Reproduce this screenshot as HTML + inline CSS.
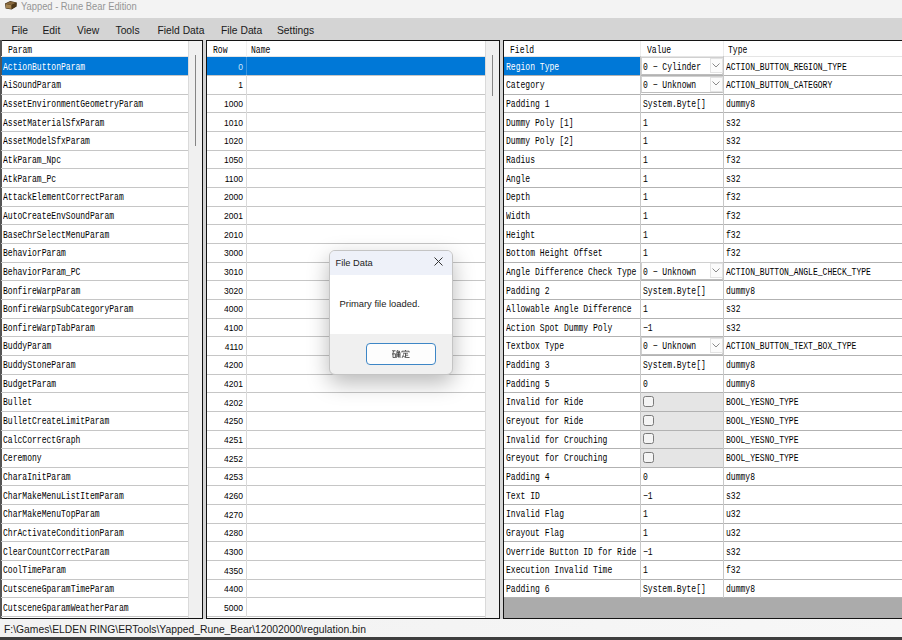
<!DOCTYPE html><html><head><meta charset="utf-8"><style>
*{margin:0;padding:0;box-sizing:border-box}
html,body{width:902px;height:640px;overflow:hidden;background:#d4d4d4;position:relative}
div,span{position:absolute}
.s{font-family:"Liberation Sans",sans-serif}
.m{font-family:"Liberation Mono",monospace;font-size:10px;white-space:nowrap;color:#000;transform:scaleX(0.805);transform-origin:0 0;margin-top:2.1px}
.hl{background:#a0a0a0;height:1px}
.vl{background:#a0a0a0;width:1px}
.sel{background:#0078d7}
.tx{line-height:18px;height:18px}
</style></head><body>

<div style="left:0;top:0;width:902px;height:18px;background:#f3f3f3"></div>
<svg style="position:absolute;left:0;top:0" width="20" height="12" viewBox="0 0 20 12"><path d="M5 3.6 L10.2 1.1 L16.8 2.4 L16.6 6.6 L11.6 9.4 L5.6 8.6 Z" fill="#3e2c14"/><path d="M5.6 3.9 L11.4 5.1 L11.5 8.9 L6 8.1 Z" fill="#a48452"/><path d="M5.6 3.7 L10.3 1.6 L16.2 2.7 L11.4 4.9 Z" fill="#86673c"/><path d="M11.9 5 L16.3 2.9 L16.1 6.3 L11.9 8.7 Z" fill="#4f3818"/></svg>
<div class="s" style="left:21px;top:1px;font-size:10.4px;line-height:11px;color:#959595;white-space:nowrap;transform:scaleX(0.9);transform-origin:0 0">Yapped - Rune Bear Edition</div>
<div style="left:0;top:18px;width:902px;height:22px;background:#d4d4d4"></div>
<div class="s" style="left:11.5px;top:24.6px;font-size:10.3px;line-height:12px;color:#1a1a1a;white-space:nowrap">File</div>
<div class="s" style="left:42.5px;top:24.6px;font-size:10.3px;line-height:12px;color:#1a1a1a;white-space:nowrap">Edit</div>
<div class="s" style="left:77px;top:24.6px;font-size:10.3px;line-height:12px;color:#1a1a1a;white-space:nowrap">View</div>
<div class="s" style="left:115.5px;top:24.6px;font-size:10.3px;line-height:12px;color:#1a1a1a;white-space:nowrap">Tools</div>
<div class="s" style="left:157.5px;top:24.6px;font-size:10.3px;line-height:12px;color:#1a1a1a;white-space:nowrap">Field Data</div>
<div class="s" style="left:221px;top:24.6px;font-size:10.3px;line-height:12px;color:#1a1a1a;white-space:nowrap">File Data</div>
<div class="s" style="left:277px;top:24.6px;font-size:10.3px;line-height:12px;color:#1a1a1a;white-space:nowrap">Settings</div>
<div style="left:0px;top:40px;width:203px;height:579px;border:1px solid #141414;background:#fff"></div>
<div style="left:0;top:40px;width:2px;height:579px;background:#555"></div>
<div class="m" style="left:7.5px;top:41px;line-height:15px">Param</div>
<div class="hl" style="left:1px;top:56px;width:187px;background:#e5e5e5"></div>
<div class="sel" style="left:2px;top:56.5px;width:186px;height:18.66px"></div>
<div class="hl" style="left:1px;top:74.96px;width:187px;background:#c6c6c6"></div>
<div class="m" style="left:3.1px;top:56.50px;line-height:18.66px;color:#fff">ActionButtonParam</div>
<div class="hl" style="left:1px;top:93.62px;width:187px;background:#c6c6c6"></div>
<div class="m" style="left:3.1px;top:75.16px;line-height:18.66px;color:#000">AiSoundParam</div>
<div class="hl" style="left:1px;top:112.28px;width:187px;background:#c6c6c6"></div>
<div class="m" style="left:3.1px;top:93.82px;line-height:18.66px;color:#000">AssetEnvironmentGeometryParam</div>
<div class="hl" style="left:1px;top:130.94px;width:187px;background:#c6c6c6"></div>
<div class="m" style="left:3.1px;top:112.48px;line-height:18.66px;color:#000">AssetMaterialSfxParam</div>
<div class="hl" style="left:1px;top:149.60px;width:187px;background:#c6c6c6"></div>
<div class="m" style="left:3.1px;top:131.14px;line-height:18.66px;color:#000">AssetModelSfxParam</div>
<div class="hl" style="left:1px;top:168.26px;width:187px;background:#c6c6c6"></div>
<div class="m" style="left:3.1px;top:149.80px;line-height:18.66px;color:#000">AtkParam_Npc</div>
<div class="hl" style="left:1px;top:186.92px;width:187px;background:#c6c6c6"></div>
<div class="m" style="left:3.1px;top:168.46px;line-height:18.66px;color:#000">AtkParam_Pc</div>
<div class="hl" style="left:1px;top:205.58px;width:187px;background:#c6c6c6"></div>
<div class="m" style="left:3.1px;top:187.12px;line-height:18.66px;color:#000">AttackElementCorrectParam</div>
<div class="hl" style="left:1px;top:224.24px;width:187px;background:#c6c6c6"></div>
<div class="m" style="left:3.1px;top:205.78px;line-height:18.66px;color:#000">AutoCreateEnvSoundParam</div>
<div class="hl" style="left:1px;top:242.90px;width:187px;background:#c6c6c6"></div>
<div class="m" style="left:3.1px;top:224.44px;line-height:18.66px;color:#000">BaseChrSelectMenuParam</div>
<div class="hl" style="left:1px;top:261.56px;width:187px;background:#c6c6c6"></div>
<div class="m" style="left:3.1px;top:243.10px;line-height:18.66px;color:#000">BehaviorParam</div>
<div class="hl" style="left:1px;top:280.22px;width:187px;background:#c6c6c6"></div>
<div class="m" style="left:3.1px;top:261.76px;line-height:18.66px;color:#000">BehaviorParam_PC</div>
<div class="hl" style="left:1px;top:298.88px;width:187px;background:#c6c6c6"></div>
<div class="m" style="left:3.1px;top:280.42px;line-height:18.66px;color:#000">BonfireWarpParam</div>
<div class="hl" style="left:1px;top:317.54px;width:187px;background:#c6c6c6"></div>
<div class="m" style="left:3.1px;top:299.08px;line-height:18.66px;color:#000">BonfireWarpSubCategoryParam</div>
<div class="hl" style="left:1px;top:336.20px;width:187px;background:#c6c6c6"></div>
<div class="m" style="left:3.1px;top:317.74px;line-height:18.66px;color:#000">BonfireWarpTabParam</div>
<div class="hl" style="left:1px;top:354.86px;width:187px;background:#c6c6c6"></div>
<div class="m" style="left:3.1px;top:336.40px;line-height:18.66px;color:#000">BuddyParam</div>
<div class="hl" style="left:1px;top:373.52px;width:187px;background:#c6c6c6"></div>
<div class="m" style="left:3.1px;top:355.06px;line-height:18.66px;color:#000">BuddyStoneParam</div>
<div class="hl" style="left:1px;top:392.18px;width:187px;background:#c6c6c6"></div>
<div class="m" style="left:3.1px;top:373.72px;line-height:18.66px;color:#000">BudgetParam</div>
<div class="hl" style="left:1px;top:410.84px;width:187px;background:#c6c6c6"></div>
<div class="m" style="left:3.1px;top:392.38px;line-height:18.66px;color:#000">Bullet</div>
<div class="hl" style="left:1px;top:429.50px;width:187px;background:#c6c6c6"></div>
<div class="m" style="left:3.1px;top:411.04px;line-height:18.66px;color:#000">BulletCreateLimitParam</div>
<div class="hl" style="left:1px;top:448.16px;width:187px;background:#c6c6c6"></div>
<div class="m" style="left:3.1px;top:429.70px;line-height:18.66px;color:#000">CalcCorrectGraph</div>
<div class="hl" style="left:1px;top:466.82px;width:187px;background:#c6c6c6"></div>
<div class="m" style="left:3.1px;top:448.36px;line-height:18.66px;color:#000">Ceremony</div>
<div class="hl" style="left:1px;top:485.48px;width:187px;background:#c6c6c6"></div>
<div class="m" style="left:3.1px;top:467.02px;line-height:18.66px;color:#000">CharaInitParam</div>
<div class="hl" style="left:1px;top:504.14px;width:187px;background:#c6c6c6"></div>
<div class="m" style="left:3.1px;top:485.68px;line-height:18.66px;color:#000">CharMakeMenuListItemParam</div>
<div class="hl" style="left:1px;top:522.80px;width:187px;background:#c6c6c6"></div>
<div class="m" style="left:3.1px;top:504.34px;line-height:18.66px;color:#000">CharMakeMenuTopParam</div>
<div class="hl" style="left:1px;top:541.46px;width:187px;background:#c6c6c6"></div>
<div class="m" style="left:3.1px;top:523.00px;line-height:18.66px;color:#000">ChrActivateConditionParam</div>
<div class="hl" style="left:1px;top:560.12px;width:187px;background:#c6c6c6"></div>
<div class="m" style="left:3.1px;top:541.66px;line-height:18.66px;color:#000">ClearCountCorrectParam</div>
<div class="hl" style="left:1px;top:578.78px;width:187px;background:#c6c6c6"></div>
<div class="m" style="left:3.1px;top:560.32px;line-height:18.66px;color:#000">CoolTimeParam</div>
<div class="hl" style="left:1px;top:597.44px;width:187px;background:#c6c6c6"></div>
<div class="m" style="left:3.1px;top:578.98px;line-height:18.66px;color:#000">CutsceneGparamTimeParam</div>
<div class="hl" style="left:1px;top:616.10px;width:187px;background:#c6c6c6"></div>
<div class="m" style="left:3.1px;top:597.64px;line-height:18.66px;color:#000">CutsceneGparamWeatherParam</div>
<div style="left:188px;top:41px;width:14px;height:577px;background:#f0f0f0;border-left:1px solid #dadada"></div>
<div style="left:194.5px;top:55px;width:1.5px;height:91px;background:#858585"></div>
<div style="left:206px;top:40px;width:294px;height:579px;border:1px solid #141414;background:#fff"></div>
<div style="left:206px;top:40px;width:1px;height:579px;background:#141414"></div>
<div class="m" style="left:213px;top:41px;line-height:15px">Row</div>
<div class="m" style="left:250.8px;top:41px;line-height:15px">Name</div>
<div class="hl" style="left:207px;top:56px;width:278px;background:#e5e5e5"></div>
<div class="vl" style="left:246px;top:41px;height:16px;background:#f0f0f0"></div>
<div class="sel" style="left:207px;top:56.5px;width:278px;height:18.66px"></div>
<div class="hl" style="left:207px;top:74.96px;width:278px;background:#c6c6c6"></div>
<div class="s" style="left:207px;width:36px;text-align:right;top:57.70px;line-height:18.66px;font-size:9.9px;color:#cfe6fb;transform:scaleX(0.86);transform-origin:100% 0">0</div>
<div class="hl" style="left:207px;top:93.62px;width:278px;background:#c6c6c6"></div>
<div class="s" style="left:207px;width:36px;text-align:right;top:76.36px;line-height:18.66px;font-size:9.9px;color:#000;transform:scaleX(0.86);transform-origin:100% 0">1</div>
<div class="hl" style="left:207px;top:112.28px;width:278px;background:#c6c6c6"></div>
<div class="s" style="left:207px;width:36px;text-align:right;top:95.02px;line-height:18.66px;font-size:9.9px;color:#000;transform:scaleX(0.86);transform-origin:100% 0">1000</div>
<div class="hl" style="left:207px;top:130.94px;width:278px;background:#c6c6c6"></div>
<div class="s" style="left:207px;width:36px;text-align:right;top:113.68px;line-height:18.66px;font-size:9.9px;color:#000;transform:scaleX(0.86);transform-origin:100% 0">1010</div>
<div class="hl" style="left:207px;top:149.60px;width:278px;background:#c6c6c6"></div>
<div class="s" style="left:207px;width:36px;text-align:right;top:132.34px;line-height:18.66px;font-size:9.9px;color:#000;transform:scaleX(0.86);transform-origin:100% 0">1020</div>
<div class="hl" style="left:207px;top:168.26px;width:278px;background:#c6c6c6"></div>
<div class="s" style="left:207px;width:36px;text-align:right;top:151.00px;line-height:18.66px;font-size:9.9px;color:#000;transform:scaleX(0.86);transform-origin:100% 0">1050</div>
<div class="hl" style="left:207px;top:186.92px;width:278px;background:#c6c6c6"></div>
<div class="s" style="left:207px;width:36px;text-align:right;top:169.66px;line-height:18.66px;font-size:9.9px;color:#000;transform:scaleX(0.86);transform-origin:100% 0">1100</div>
<div class="hl" style="left:207px;top:205.58px;width:278px;background:#c6c6c6"></div>
<div class="s" style="left:207px;width:36px;text-align:right;top:188.32px;line-height:18.66px;font-size:9.9px;color:#000;transform:scaleX(0.86);transform-origin:100% 0">2000</div>
<div class="hl" style="left:207px;top:224.24px;width:278px;background:#c6c6c6"></div>
<div class="s" style="left:207px;width:36px;text-align:right;top:206.98px;line-height:18.66px;font-size:9.9px;color:#000;transform:scaleX(0.86);transform-origin:100% 0">2001</div>
<div class="hl" style="left:207px;top:242.90px;width:278px;background:#c6c6c6"></div>
<div class="s" style="left:207px;width:36px;text-align:right;top:225.64px;line-height:18.66px;font-size:9.9px;color:#000;transform:scaleX(0.86);transform-origin:100% 0">2010</div>
<div class="hl" style="left:207px;top:261.56px;width:278px;background:#c6c6c6"></div>
<div class="s" style="left:207px;width:36px;text-align:right;top:244.30px;line-height:18.66px;font-size:9.9px;color:#000;transform:scaleX(0.86);transform-origin:100% 0">3000</div>
<div class="hl" style="left:207px;top:280.22px;width:278px;background:#c6c6c6"></div>
<div class="s" style="left:207px;width:36px;text-align:right;top:262.96px;line-height:18.66px;font-size:9.9px;color:#000;transform:scaleX(0.86);transform-origin:100% 0">3010</div>
<div class="hl" style="left:207px;top:298.88px;width:278px;background:#c6c6c6"></div>
<div class="s" style="left:207px;width:36px;text-align:right;top:281.62px;line-height:18.66px;font-size:9.9px;color:#000;transform:scaleX(0.86);transform-origin:100% 0">3020</div>
<div class="hl" style="left:207px;top:317.54px;width:278px;background:#c6c6c6"></div>
<div class="s" style="left:207px;width:36px;text-align:right;top:300.28px;line-height:18.66px;font-size:9.9px;color:#000;transform:scaleX(0.86);transform-origin:100% 0">4000</div>
<div class="hl" style="left:207px;top:336.20px;width:278px;background:#c6c6c6"></div>
<div class="s" style="left:207px;width:36px;text-align:right;top:318.94px;line-height:18.66px;font-size:9.9px;color:#000;transform:scaleX(0.86);transform-origin:100% 0">4100</div>
<div class="hl" style="left:207px;top:354.86px;width:278px;background:#c6c6c6"></div>
<div class="s" style="left:207px;width:36px;text-align:right;top:337.60px;line-height:18.66px;font-size:9.9px;color:#000;transform:scaleX(0.86);transform-origin:100% 0">4110</div>
<div class="hl" style="left:207px;top:373.52px;width:278px;background:#c6c6c6"></div>
<div class="s" style="left:207px;width:36px;text-align:right;top:356.26px;line-height:18.66px;font-size:9.9px;color:#000;transform:scaleX(0.86);transform-origin:100% 0">4200</div>
<div class="hl" style="left:207px;top:392.18px;width:278px;background:#c6c6c6"></div>
<div class="s" style="left:207px;width:36px;text-align:right;top:374.92px;line-height:18.66px;font-size:9.9px;color:#000;transform:scaleX(0.86);transform-origin:100% 0">4201</div>
<div class="hl" style="left:207px;top:410.84px;width:278px;background:#c6c6c6"></div>
<div class="s" style="left:207px;width:36px;text-align:right;top:393.58px;line-height:18.66px;font-size:9.9px;color:#000;transform:scaleX(0.86);transform-origin:100% 0">4202</div>
<div class="hl" style="left:207px;top:429.50px;width:278px;background:#c6c6c6"></div>
<div class="s" style="left:207px;width:36px;text-align:right;top:412.24px;line-height:18.66px;font-size:9.9px;color:#000;transform:scaleX(0.86);transform-origin:100% 0">4250</div>
<div class="hl" style="left:207px;top:448.16px;width:278px;background:#c6c6c6"></div>
<div class="s" style="left:207px;width:36px;text-align:right;top:430.90px;line-height:18.66px;font-size:9.9px;color:#000;transform:scaleX(0.86);transform-origin:100% 0">4251</div>
<div class="hl" style="left:207px;top:466.82px;width:278px;background:#c6c6c6"></div>
<div class="s" style="left:207px;width:36px;text-align:right;top:449.56px;line-height:18.66px;font-size:9.9px;color:#000;transform:scaleX(0.86);transform-origin:100% 0">4252</div>
<div class="hl" style="left:207px;top:485.48px;width:278px;background:#c6c6c6"></div>
<div class="s" style="left:207px;width:36px;text-align:right;top:468.22px;line-height:18.66px;font-size:9.9px;color:#000;transform:scaleX(0.86);transform-origin:100% 0">4253</div>
<div class="hl" style="left:207px;top:504.14px;width:278px;background:#c6c6c6"></div>
<div class="s" style="left:207px;width:36px;text-align:right;top:486.88px;line-height:18.66px;font-size:9.9px;color:#000;transform:scaleX(0.86);transform-origin:100% 0">4260</div>
<div class="hl" style="left:207px;top:522.80px;width:278px;background:#c6c6c6"></div>
<div class="s" style="left:207px;width:36px;text-align:right;top:505.54px;line-height:18.66px;font-size:9.9px;color:#000;transform:scaleX(0.86);transform-origin:100% 0">4270</div>
<div class="hl" style="left:207px;top:541.46px;width:278px;background:#c6c6c6"></div>
<div class="s" style="left:207px;width:36px;text-align:right;top:524.20px;line-height:18.66px;font-size:9.9px;color:#000;transform:scaleX(0.86);transform-origin:100% 0">4280</div>
<div class="hl" style="left:207px;top:560.12px;width:278px;background:#c6c6c6"></div>
<div class="s" style="left:207px;width:36px;text-align:right;top:542.86px;line-height:18.66px;font-size:9.9px;color:#000;transform:scaleX(0.86);transform-origin:100% 0">4300</div>
<div class="hl" style="left:207px;top:578.78px;width:278px;background:#c6c6c6"></div>
<div class="s" style="left:207px;width:36px;text-align:right;top:561.52px;line-height:18.66px;font-size:9.9px;color:#000;transform:scaleX(0.86);transform-origin:100% 0">4350</div>
<div class="hl" style="left:207px;top:597.44px;width:278px;background:#c6c6c6"></div>
<div class="s" style="left:207px;width:36px;text-align:right;top:580.18px;line-height:18.66px;font-size:9.9px;color:#000;transform:scaleX(0.86);transform-origin:100% 0">4400</div>
<div class="hl" style="left:207px;top:616.10px;width:278px;background:#c6c6c6"></div>
<div class="s" style="left:207px;width:36px;text-align:right;top:598.84px;line-height:18.66px;font-size:9.9px;color:#000;transform:scaleX(0.86);transform-origin:100% 0">5000</div>
<div class="vl" style="left:246px;top:56.5px;height:560px;background:#dadada"></div>
<div class="vl" style="left:246px;top:56.5px;height:18.66px;background:#3b95de"></div>
<div style="left:485px;top:41px;width:14px;height:577px;background:#f0f0f0;border-left:1px solid #dadada"></div>
<div style="left:491.5px;top:55px;width:1.5px;height:41px;background:#858585"></div>
<div style="left:503px;top:40px;width:400px;height:579px;border:1px solid #141414;border-right:none;background:#ababab"></div>
<div style="left:503px;top:40px;width:1px;height:579px;background:#141414"></div>
<div style="left:504px;top:41px;width:398px;height:557.14px;background:#fff"></div>
<div class="m" style="left:510px;top:41px;line-height:15px">Field</div>
<div class="m" style="left:646.5px;top:41px;line-height:15px">Value</div>
<div class="m" style="left:727.5px;top:41px;line-height:15px">Type</div>
<div class="hl" style="left:504px;top:56px;width:398px;background:#e5e5e5"></div>
<div class="sel" style="left:504px;top:56.5px;width:136.5px;height:18.66px"></div>
<div style="left:641px;top:392.38px;width:82px;height:18.66px;background:#e5e5e5"></div>
<div style="left:641px;top:411.04px;width:82px;height:18.66px;background:#e5e5e5"></div>
<div style="left:641px;top:429.7px;width:82px;height:18.66px;background:#e5e5e5"></div>
<div style="left:641px;top:448.36px;width:82px;height:18.66px;background:#e5e5e5"></div>
<div class="hl" style="left:504px;top:74.96px;width:398px;background:#b2b2b2"></div>
<div class="hl" style="left:504px;top:93.62px;width:398px;background:#b2b2b2"></div>
<div class="hl" style="left:504px;top:112.28px;width:398px;background:#b2b2b2"></div>
<div class="hl" style="left:504px;top:130.94px;width:398px;background:#b2b2b2"></div>
<div class="hl" style="left:504px;top:149.60px;width:398px;background:#b2b2b2"></div>
<div class="hl" style="left:504px;top:168.26px;width:398px;background:#b2b2b2"></div>
<div class="hl" style="left:504px;top:186.92px;width:398px;background:#b2b2b2"></div>
<div class="hl" style="left:504px;top:205.58px;width:398px;background:#b2b2b2"></div>
<div class="hl" style="left:504px;top:224.24px;width:398px;background:#b2b2b2"></div>
<div class="hl" style="left:504px;top:242.90px;width:398px;background:#b2b2b2"></div>
<div class="hl" style="left:504px;top:261.56px;width:398px;background:#b2b2b2"></div>
<div class="hl" style="left:504px;top:280.22px;width:398px;background:#b2b2b2"></div>
<div class="hl" style="left:504px;top:298.88px;width:398px;background:#b2b2b2"></div>
<div class="hl" style="left:504px;top:317.54px;width:398px;background:#b2b2b2"></div>
<div class="hl" style="left:504px;top:336.20px;width:398px;background:#b2b2b2"></div>
<div class="hl" style="left:504px;top:354.86px;width:398px;background:#b2b2b2"></div>
<div class="hl" style="left:504px;top:373.52px;width:398px;background:#b2b2b2"></div>
<div class="hl" style="left:504px;top:392.18px;width:398px;background:#b2b2b2"></div>
<div class="hl" style="left:504px;top:410.84px;width:398px;background:#b2b2b2"></div>
<div class="hl" style="left:504px;top:429.50px;width:398px;background:#b2b2b2"></div>
<div class="hl" style="left:504px;top:448.16px;width:398px;background:#b2b2b2"></div>
<div class="hl" style="left:504px;top:466.82px;width:398px;background:#b2b2b2"></div>
<div class="hl" style="left:504px;top:485.48px;width:398px;background:#b2b2b2"></div>
<div class="hl" style="left:504px;top:504.14px;width:398px;background:#b2b2b2"></div>
<div class="hl" style="left:504px;top:522.80px;width:398px;background:#b2b2b2"></div>
<div class="hl" style="left:504px;top:541.46px;width:398px;background:#b2b2b2"></div>
<div class="hl" style="left:504px;top:560.12px;width:398px;background:#b2b2b2"></div>
<div class="hl" style="left:504px;top:578.78px;width:398px;background:#b2b2b2"></div>
<div class="hl" style="left:504px;top:597.44px;width:398px;background:#b2b2b2"></div>
<div class="m" style="left:506px;top:56.50px;line-height:18.66px;color:#fff">Region Type</div>
<div style="left:641px;top:57.00px;width:82px;height:17.66px;background:#fff;border:1px solid #d0d0d0;border-bottom-color:#bdbdbd"></div>
<div style="left:709.5px;top:58.00px;width:13px;height:15.16px;background:#fbfbfb;border:1px solid #e3e3e3"></div>
<svg style="position:absolute;left:712px;top:62.80px" width="8" height="5" viewBox="0 0 8 5"><path d="M0.5 0.5 L4 4 L7.5 0.5" fill="none" stroke="#8a8a8a" stroke-width="1"/></svg>
<div class="m" style="left:643px;top:56.50px;line-height:18.66px">0 − Cylinder</div>
<div class="m" style="left:726px;top:56.50px;line-height:18.66px">ACTION_BUTTON_REGION_TYPE</div>
<div class="m" style="left:506px;top:75.16px;line-height:18.66px;color:#000">Category</div>
<div style="left:641px;top:75.66px;width:82px;height:17.66px;background:#fff;border:1px solid #d0d0d0;border-bottom-color:#bdbdbd"></div>
<div style="left:709.5px;top:76.66px;width:13px;height:15.16px;background:#fbfbfb;border:1px solid #e3e3e3"></div>
<svg style="position:absolute;left:712px;top:81.46px" width="8" height="5" viewBox="0 0 8 5"><path d="M0.5 0.5 L4 4 L7.5 0.5" fill="none" stroke="#8a8a8a" stroke-width="1"/></svg>
<div class="m" style="left:643px;top:75.16px;line-height:18.66px">0 − Unknown</div>
<div class="m" style="left:726px;top:75.16px;line-height:18.66px">ACTION_BUTTON_CATEGORY</div>
<div class="m" style="left:506px;top:93.82px;line-height:18.66px;color:#000">Padding 1</div>
<div class="m" style="left:643px;top:93.82px;line-height:18.66px">System.Byte[]</div>
<div class="m" style="left:726px;top:93.82px;line-height:18.66px">dummy8</div>
<div class="m" style="left:506px;top:112.48px;line-height:18.66px;color:#000">Dummy Poly [1]</div>
<div class="m" style="left:643px;top:112.48px;line-height:18.66px">1</div>
<div class="m" style="left:726px;top:112.48px;line-height:18.66px">s32</div>
<div class="m" style="left:506px;top:131.14px;line-height:18.66px;color:#000">Dummy Poly [2]</div>
<div class="m" style="left:643px;top:131.14px;line-height:18.66px">1</div>
<div class="m" style="left:726px;top:131.14px;line-height:18.66px">s32</div>
<div class="m" style="left:506px;top:149.80px;line-height:18.66px;color:#000">Radius</div>
<div class="m" style="left:643px;top:149.80px;line-height:18.66px">1</div>
<div class="m" style="left:726px;top:149.80px;line-height:18.66px">f32</div>
<div class="m" style="left:506px;top:168.46px;line-height:18.66px;color:#000">Angle</div>
<div class="m" style="left:643px;top:168.46px;line-height:18.66px">1</div>
<div class="m" style="left:726px;top:168.46px;line-height:18.66px">s32</div>
<div class="m" style="left:506px;top:187.12px;line-height:18.66px;color:#000">Depth</div>
<div class="m" style="left:643px;top:187.12px;line-height:18.66px">1</div>
<div class="m" style="left:726px;top:187.12px;line-height:18.66px">f32</div>
<div class="m" style="left:506px;top:205.78px;line-height:18.66px;color:#000">Width</div>
<div class="m" style="left:643px;top:205.78px;line-height:18.66px">1</div>
<div class="m" style="left:726px;top:205.78px;line-height:18.66px">f32</div>
<div class="m" style="left:506px;top:224.44px;line-height:18.66px;color:#000">Height</div>
<div class="m" style="left:643px;top:224.44px;line-height:18.66px">1</div>
<div class="m" style="left:726px;top:224.44px;line-height:18.66px">f32</div>
<div class="m" style="left:506px;top:243.10px;line-height:18.66px;color:#000">Bottom Height Offset</div>
<div class="m" style="left:643px;top:243.10px;line-height:18.66px">1</div>
<div class="m" style="left:726px;top:243.10px;line-height:18.66px">f32</div>
<div class="m" style="left:506px;top:261.76px;line-height:18.66px;color:#000">Angle Difference Check Type</div>
<div style="left:641px;top:262.26px;width:82px;height:17.66px;background:#fff;border:1px solid #d0d0d0;border-bottom-color:#bdbdbd"></div>
<div style="left:709.5px;top:263.26px;width:13px;height:15.16px;background:#fbfbfb;border:1px solid #e3e3e3"></div>
<svg style="position:absolute;left:712px;top:268.06px" width="8" height="5" viewBox="0 0 8 5"><path d="M0.5 0.5 L4 4 L7.5 0.5" fill="none" stroke="#8a8a8a" stroke-width="1"/></svg>
<div class="m" style="left:643px;top:261.76px;line-height:18.66px">0 − Unknown</div>
<div class="m" style="left:726px;top:261.76px;line-height:18.66px">ACTION_BUTTON_ANGLE_CHECK_TYPE</div>
<div class="m" style="left:506px;top:280.42px;line-height:18.66px;color:#000">Padding 2</div>
<div class="m" style="left:643px;top:280.42px;line-height:18.66px">System.Byte[]</div>
<div class="m" style="left:726px;top:280.42px;line-height:18.66px">dummy8</div>
<div class="m" style="left:506px;top:299.08px;line-height:18.66px;color:#000">Allowable Angle Difference</div>
<div class="m" style="left:643px;top:299.08px;line-height:18.66px">1</div>
<div class="m" style="left:726px;top:299.08px;line-height:18.66px">s32</div>
<div class="m" style="left:506px;top:317.74px;line-height:18.66px;color:#000">Action Spot Dummy Poly</div>
<div class="m" style="left:643px;top:317.74px;line-height:18.66px">−1</div>
<div class="m" style="left:726px;top:317.74px;line-height:18.66px">s32</div>
<div class="m" style="left:506px;top:336.40px;line-height:18.66px;color:#000">Textbox Type</div>
<div style="left:641px;top:336.90px;width:82px;height:17.66px;background:#fff;border:1px solid #d0d0d0;border-bottom-color:#bdbdbd"></div>
<div style="left:709.5px;top:337.90px;width:13px;height:15.16px;background:#fbfbfb;border:1px solid #e3e3e3"></div>
<svg style="position:absolute;left:712px;top:342.70px" width="8" height="5" viewBox="0 0 8 5"><path d="M0.5 0.5 L4 4 L7.5 0.5" fill="none" stroke="#8a8a8a" stroke-width="1"/></svg>
<div class="m" style="left:643px;top:336.40px;line-height:18.66px">0 − Unknown</div>
<div class="m" style="left:726px;top:336.40px;line-height:18.66px">ACTION_BUTTON_TEXT_BOX_TYPE</div>
<div class="m" style="left:506px;top:355.06px;line-height:18.66px;color:#000">Padding 3</div>
<div class="m" style="left:643px;top:355.06px;line-height:18.66px">System.Byte[]</div>
<div class="m" style="left:726px;top:355.06px;line-height:18.66px">dummy8</div>
<div class="m" style="left:506px;top:373.72px;line-height:18.66px;color:#000">Padding 5</div>
<div class="m" style="left:643px;top:373.72px;line-height:18.66px">0</div>
<div class="m" style="left:726px;top:373.72px;line-height:18.66px">dummy8</div>
<div style="left:643px;top:396.08px;width:10.6px;height:11px;border:1px solid #7a7a7a;border-radius:2.5px;background:#f4f4f4"></div>
<div class="m" style="left:506px;top:392.38px;line-height:18.66px;color:#000">Invalid for Ride</div>
<div class="m" style="left:726px;top:392.38px;line-height:18.66px">BOOL_YESNO_TYPE</div>
<div style="left:643px;top:414.74px;width:10.6px;height:11px;border:1px solid #7a7a7a;border-radius:2.5px;background:#f4f4f4"></div>
<div class="m" style="left:506px;top:411.04px;line-height:18.66px;color:#000">Greyout for Ride</div>
<div class="m" style="left:726px;top:411.04px;line-height:18.66px">BOOL_YESNO_TYPE</div>
<div style="left:643px;top:433.40px;width:10.6px;height:11px;border:1px solid #7a7a7a;border-radius:2.5px;background:#f4f4f4"></div>
<div class="m" style="left:506px;top:429.70px;line-height:18.66px;color:#000">Invalid for Crouching</div>
<div class="m" style="left:726px;top:429.70px;line-height:18.66px">BOOL_YESNO_TYPE</div>
<div style="left:643px;top:452.06px;width:10.6px;height:11px;border:1px solid #7a7a7a;border-radius:2.5px;background:#f4f4f4"></div>
<div class="m" style="left:506px;top:448.36px;line-height:18.66px;color:#000">Greyout for Crouching</div>
<div class="m" style="left:726px;top:448.36px;line-height:18.66px">BOOL_YESNO_TYPE</div>
<div class="m" style="left:506px;top:467.02px;line-height:18.66px;color:#000">Padding 4</div>
<div class="m" style="left:643px;top:467.02px;line-height:18.66px">0</div>
<div class="m" style="left:726px;top:467.02px;line-height:18.66px">dummy8</div>
<div class="m" style="left:506px;top:485.68px;line-height:18.66px;color:#000">Text ID</div>
<div class="m" style="left:643px;top:485.68px;line-height:18.66px">−1</div>
<div class="m" style="left:726px;top:485.68px;line-height:18.66px">s32</div>
<div class="m" style="left:506px;top:504.34px;line-height:18.66px;color:#000">Invalid Flag</div>
<div class="m" style="left:643px;top:504.34px;line-height:18.66px">1</div>
<div class="m" style="left:726px;top:504.34px;line-height:18.66px">u32</div>
<div class="m" style="left:506px;top:523.00px;line-height:18.66px;color:#000">Grayout Flag</div>
<div class="m" style="left:643px;top:523.00px;line-height:18.66px">1</div>
<div class="m" style="left:726px;top:523.00px;line-height:18.66px">u32</div>
<div class="m" style="left:506px;top:541.66px;line-height:18.66px;color:#000">Override Button ID for Ride</div>
<div class="m" style="left:643px;top:541.66px;line-height:18.66px">−1</div>
<div class="m" style="left:726px;top:541.66px;line-height:18.66px">s32</div>
<div class="m" style="left:506px;top:560.32px;line-height:18.66px;color:#000">Execution Invalid Time</div>
<div class="m" style="left:643px;top:560.32px;line-height:18.66px">1</div>
<div class="m" style="left:726px;top:560.32px;line-height:18.66px">f32</div>
<div class="m" style="left:506px;top:578.98px;line-height:18.66px;color:#000">Padding 6</div>
<div class="m" style="left:643px;top:578.98px;line-height:18.66px">System.Byte[]</div>
<div class="m" style="left:726px;top:578.98px;line-height:18.66px">dummy8</div>
<div class="vl" style="left:640px;top:41px;height:556.64px;background:#c8c8c8"></div>
<div class="vl" style="left:723px;top:41px;height:556.64px;background:#c8c8c8"></div>
<div class="vl" style="left:640px;top:41px;height:15px;background:#ececec"></div>
<div class="vl" style="left:723px;top:41px;height:15px;background:#ececec"></div>
<div style="left:0;top:619px;width:902px;height:18px;background:linear-gradient(90deg,#f2f2f2,#f4f4f4 50%,#f7f7f7)"></div>
<div class="s" style="left:4px;top:622.5px;font-size:10.33px;line-height:14px;color:#1a1a1a;white-space:nowrap">F:\Games\ELDEN RING\ERTools\Yapped_Rune_Bear\12002000\regulation.bin</div>
<div style="left:0;top:637px;width:902px;height:3px;background:#3e3e3e"></div>
<div style="left:329px;top:249.5px;width:123.5px;height:125.5px;border-radius:6px;background:#f0f0f0;border:1px solid #c4c4c4;overflow:hidden;box-shadow:0 8px 22px rgba(0,0,0,0.28)"><div style="left:0;top:0;width:122px;height:24px;background:#eef1f9"></div><div style="left:0;top:24px;width:122px;height:59px;background:#fff"></div></div>
<div class="s" style="left:335.5px;top:256.8px;font-size:9.3px;line-height:12px;color:#222;white-space:nowrap">File Data</div>
<svg style="position:absolute;left:434px;top:257px" width="9" height="9" viewBox="0 0 9 9"><path d="M0.5 0.5 L8.5 8.5 M8.5 0.5 L0.5 8.5" stroke="#333" stroke-width="1"/></svg>
<div class="s" style="left:339.5px;top:298px;font-size:9.4px;line-height:12px;color:#1a1a1a;white-space:nowrap">Primary file loaded.</div>
<div style="left:366px;top:343.3px;width:70px;height:21.6px;border:1.5px solid #3d86c6;border-radius:4px;background:#fdfdfd"></div>
<svg style="position:absolute;left:392px;top:349.8px" width="18" height="8.5" viewBox="0 0 18 8.5"><g fill="none" stroke="#2a2a2a" stroke-width="0.75"><path d="M0 0.8 H3.6 M1.9 0.8 L0.3 4.6 M1 3.8 H3.4 V7.6 H1 Z M5.6 0.1 L4.6 1.7 M5.1 1.2 H7.6 L7.2 2.1 M4.8 2.4 H8 V7.9 M4.8 2.4 V6.2 L4.2 7.9 M4.8 4.2 H8 M4.8 6 H8 M6.4 2.4 V7.6"/><path d="M13.5 0 V1.1 M9.9 2.5 V1.2 H17.1 V2.5 M11 3.2 H16 M13.5 3.2 V7.4 M13.5 5.2 H16.2 M11.6 4.4 L10.1 7.9 M11.3 6.3 Q12.5 7.7 17.6 7.6"/></g></svg>
</body></html>
